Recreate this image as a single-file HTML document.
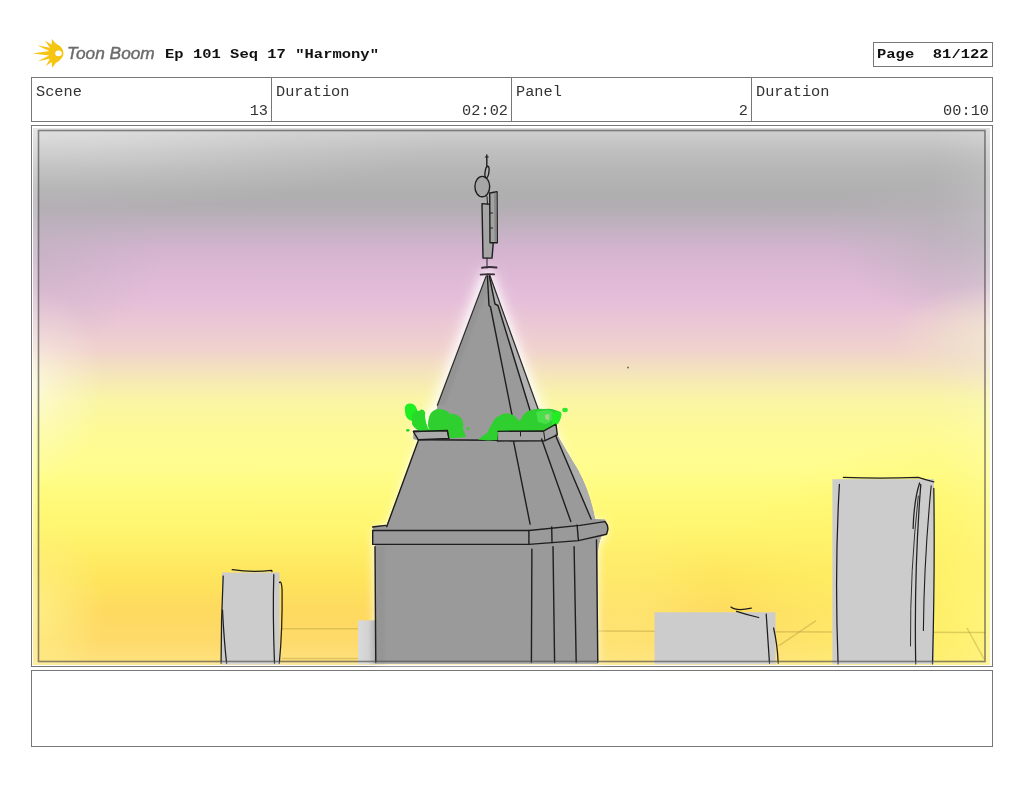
<!DOCTYPE html>
<html><head><meta charset="utf-8">
<style>
html,body{margin:0;padding:0;background:#fff;}
body{width:1024px;height:793px;position:relative;overflow:hidden;font-family:"Liberation Mono",monospace;color:#111;}
.abs{position:absolute;}
.logo{left:67px;top:45px;font-family:"Liberation Sans",sans-serif;font-style:italic;font-size:16px;line-height:18px;color:#6b6b6b;-webkit-text-stroke:0.4px #6b6b6b;white-space:pre;transform-origin:0 0;transform:scaleX(1.08);}
.title{left:165px;top:47px;font-weight:bold;font-size:15.5px;line-height:18px;white-space:pre;transform-origin:0 0;transform:scaleY(0.88);}
.page{left:873px;top:42px;width:120px;height:25px;border:1px solid #777;box-sizing:border-box;}
.ptxt{position:absolute;left:3px;top:4px;font-weight:bold;font-size:15.5px;line-height:18px;white-space:pre;transform-origin:0 0;transform:scaleY(0.88);}
.hdr{left:31px;top:77px;width:962px;height:45px;border:1px solid #777;box-sizing:border-box;}
.cell{position:absolute;top:0;height:43px;border-right:1px solid #777;box-sizing:border-box;}
.lbl{position:absolute;color:#333;left:4px;top:6px;font-size:15.3px;line-height:18px;white-space:pre;transform-origin:0 0;transform:scaleY(0.9);}
.val{position:absolute;color:#333;right:3px;top:25px;font-size:15.3px;line-height:18px;white-space:pre;transform-origin:100% 0;transform:scaleY(0.9);}
.panel{left:31px;top:125px;width:962px;height:542px;border:1px solid #777;box-sizing:border-box;}
.cap{left:31px;top:670px;width:962px;height:77px;border:1px solid #777;box-sizing:border-box;}
</style></head>
<body>
<svg class="abs" style="left:0;top:0" width="170" height="75" viewBox="0 0 170 75">
<path fill="#f6c512" d="M51.9 39 L55.8 43.6 Q63.6 47.6 63.5 53.2 Q63.5 58.8 55.8 63 L52.3 67.7 L51.6 62 L45.9 66 L49.8 58.8 L37.7 61.3 L49.2 55.6 L32.6 53.4 L49.2 51 L37.1 45.2 L49.8 47.8 L45 40.5 L51.6 44.8 Z"/>
<ellipse cx="58.5" cy="53.3" rx="3.3" ry="2.9" fill="#fff"/>
</svg>
<div class="abs logo">Toon Boom</div>
<div class="abs title">Ep 101 Seq 17 "Harmony"</div>
<div class="abs page"><span class="ptxt">Page  81/122</span></div>
<div class="abs hdr">
 <div class="cell" style="left:0;width:240px;"><span class="lbl">Scene</span><span class="val">13</span></div>
 <div class="cell" style="left:240px;width:240px;"><span class="lbl">Duration</span><span class="val">02:02</span></div>
 <div class="cell" style="left:480px;width:240px;"><span class="lbl">Panel</span><span class="val">2</span></div>
 <div class="cell" style="left:720px;width:240px;border-right:none;"><span class="lbl">Duration</span><span class="val">00:10</span></div>
</div>
<div class="abs panel"></div>
<svg class="abs" style="left:0;top:0" width="1024" height="793" viewBox="0 0 1024 793">
<defs>
 <linearGradient id="sky" x1="0" y1="128" x2="0" y2="665" gradientUnits="userSpaceOnUse">
  <stop offset="0.0000" stop-color="#d0d0d0"/>
  <stop offset="0.0410" stop-color="#c0c0c0"/>
  <stop offset="0.0782" stop-color="#b6b6b6"/>
  <stop offset="0.1155" stop-color="#b0b0b0"/>
  <stop offset="0.1434" stop-color="#b1aeb1"/>
  <stop offset="0.1713" stop-color="#bcb0bc"/>
  <stop offset="0.2272" stop-color="#d4b4d0"/>
  <stop offset="0.2737" stop-color="#deb9d6"/>
  <stop offset="0.3203" stop-color="#e5bed9"/>
  <stop offset="0.3669" stop-color="#ebc8d4"/>
  <stop offset="0.4134" stop-color="#f0d2cd"/>
  <stop offset="0.4600" stop-color="#f5e6b9"/>
  <stop offset="0.5065" stop-color="#faf5a5"/>
  <stop offset="0.5624" stop-color="#fdfa96"/>
  <stop offset="0.6369" stop-color="#fffd8c"/>
  <stop offset="0.6927" stop-color="#fffa7a"/>
  <stop offset="0.7486" stop-color="#fff56e"/>
  <stop offset="0.8417" stop-color="#fee45c"/>
  <stop offset="0.8976" stop-color="#feda5f"/>
  <stop offset="0.9534" stop-color="#feda6a"/>
  <stop offset="1.0000" stop-color="#fee280"/>
 </linearGradient>
 <linearGradient id="vig" x1="33" y1="0" x2="990" y2="0" gradientUnits="userSpaceOnUse">
  <stop offset="0" stop-color="#fff" stop-opacity="0"/>
  <stop offset="0.94" stop-color="#fff" stop-opacity="0"/>
  <stop offset="0.97" stop-color="#fff" stop-opacity="0.05"/>
  <stop offset="1" stop-color="#fff" stop-opacity="0.12"/>
 </linearGradient>
 <linearGradient id="lightrect" x1="358" y1="0" x2="375" y2="0" gradientUnits="userSpaceOnUse">
  <stop offset="0" stop-color="#dadada"/><stop offset="0.6" stop-color="#d2d2d2"/><stop offset="1" stop-color="#b4b4b4"/>
 </linearGradient>
 <radialGradient id="lemonR" cx="1000" cy="610" r="300" gradientUnits="userSpaceOnUse" gradientTransform="translate(1000 610) scale(1 0.6) translate(-1000 -610)">
  <stop offset="0" stop-color="#fff66a" stop-opacity="0.95"/>
  <stop offset="0.45" stop-color="#fff56a" stop-opacity="0.6"/>
  <stop offset="1" stop-color="#fff56a" stop-opacity="0"/>
 </radialGradient>
 <radialGradient id="grayR" cx="1000" cy="235" r="170" gradientUnits="userSpaceOnUse" gradientTransform="translate(1000 235) scale(1 0.55) translate(-1000 -235)">
  <stop offset="0" stop-color="#b4b0b6" stop-opacity="0.85"/>
  <stop offset="0.55" stop-color="#b8b4b8" stop-opacity="0.4"/>
  <stop offset="1" stop-color="#b8b4b8" stop-opacity="0"/>
 </radialGradient>
 <radialGradient id="peachR" cx="1000" cy="338" r="110" gradientUnits="userSpaceOnUse" gradientTransform="translate(1000 338) scale(1 0.5) translate(-1000 -338)">
  <stop offset="0" stop-color="#f0e6c8" stop-opacity="0.8"/>
  <stop offset="0.5" stop-color="#f0e6c8" stop-opacity="0.45"/>
  <stop offset="1" stop-color="#f0e6c8" stop-opacity="0"/>
 </radialGradient>
 <radialGradient id="paleL" cx="33" cy="385" r="100" gradientUnits="userSpaceOnUse" gradientTransform="translate(33 385) scale(0.7 1) translate(-33 -385)">
  <stop offset="0" stop-color="#fffff0" stop-opacity="0.6"/>
  <stop offset="0.5" stop-color="#fffff0" stop-opacity="0.25"/>
  <stop offset="1" stop-color="#fffff0" stop-opacity="0"/>
 </radialGradient>
 <radialGradient id="lemonL" cx="33" cy="610" r="90" gradientUnits="userSpaceOnUse" gradientTransform="translate(33 610) scale(0.8 1) translate(-33 -610)">
  <stop offset="0" stop-color="#fff490" stop-opacity="0.75"/>
  <stop offset="1" stop-color="#fff490" stop-opacity="0"/>
 </radialGradient>
 <radialGradient id="lightTL" cx="33" cy="128" r="420" gradientUnits="userSpaceOnUse" gradientTransform="translate(33 128) scale(1 0.2) translate(-33 -128)">
  <stop offset="0" stop-color="#fff" stop-opacity="0.35"/>
  <stop offset="0.3" stop-color="#fff" stop-opacity="0.25"/>
  <stop offset="0.65" stop-color="#fff" stop-opacity="0.1"/>
  <stop offset="1" stop-color="#fff" stop-opacity="0"/>
 </radialGradient>
 <radialGradient id="grayL" cx="33" cy="255" r="130" gradientUnits="userSpaceOnUse" gradientTransform="translate(33 255) scale(1 0.75) translate(-33 -255)">
  <stop offset="0" stop-color="#b8b0b8" stop-opacity="0.45"/>
  <stop offset="1" stop-color="#b8b0b8" stop-opacity="0"/>
 </radialGradient>
 <radialGradient id="lemonM" cx="625" cy="610" r="100" gradientUnits="userSpaceOnUse">
  <stop offset="0" stop-color="#fff284" stop-opacity="0.45"/>
  <stop offset="0.6" stop-color="#fff284" stop-opacity="0.2"/>
  <stop offset="1" stop-color="#fff284" stop-opacity="0"/>
 </radialGradient>
 <filter id="glow" x="-30%" y="-30%" width="160%" height="160%"><feGaussianBlur stdDeviation="5"/></filter>
 <filter id="glow2" x="-50%" y="-50%" width="200%" height="200%"><feMorphology operator="dilate" radius="4"/><feGaussianBlur stdDeviation="7"/></filter>
 <filter id="blur1" x="-20%" y="-20%" width="140%" height="140%"><feGaussianBlur stdDeviation="0.8"/></filter>
</defs>
<rect x="33" y="128" width="957" height="537" fill="url(#sky)"/>
<rect x="33" y="128" width="957" height="537" fill="url(#lemonR)"/>
<rect x="33" y="128" width="957" height="537" fill="url(#grayR)"/>
<rect x="33" y="128" width="957" height="537" fill="url(#peachR)"/>
<rect x="33" y="128" width="957" height="537" fill="url(#vig)"/>
<rect x="33" y="128" width="957" height="537" fill="url(#grayL)"/>
<rect x="33" y="128" width="957" height="537" fill="url(#paleL)"/>
<rect x="33" y="128" width="957" height="537" fill="url(#lightTL)"/>
<rect x="33" y="128" width="957" height="537" fill="url(#lemonL)"/>
<rect x="33" y="128" width="957" height="537" fill="url(#lemonM)"/>
<!-- perspective lines -->
<g stroke="#b8a040" stroke-opacity="0.45" stroke-width="1.5" fill="none">
 <path d="M282 628.7 L358 628.7"/>
 <path d="M598 631 L985 632.6"/>
 <path d="M779 645.7 L816 620.6"/>
 <path d="M967 628 L984 659"/>
 <path d="M282 658.5 L358 658.5"/>
</g>
<!-- glow around tower -->
<g filter="url(#glow)" fill="#fff" opacity="0.85">
 <path d="M487 268 L540 410 L556 430 L592 519 L606 522 L606 536 L598 545 L598 664 L375 664 L373 528 L387 526 L418 440 L412 430 L437 405 Z"/>
</g>
<g filter="url(#glow2)" fill="#fff" opacity="0.65">
 <path d="M487 272 L538 409 L548 425 L428 425 L437 405 Z"/>
</g>
<circle cx="628" cy="367.5" r="1" fill="#555" opacity="0.8"/>
<!-- small buildings -->
<rect x="222" y="572.5" width="57.5" height="92" fill="#cccccc"/>
<rect x="358" y="620.4" width="17" height="44" fill="url(#lightrect)"/>
<rect x="654.5" y="612.3" width="121" height="52" fill="#cccccc"/>
<rect x="832.4" y="479.2" width="101.5" height="185" fill="#cccccc"/>
<g stroke="#1e1e1e" stroke-width="1.25" fill="none" stroke-linecap="round" stroke-linejoin="round">
 <path d="M232.2 569.7 Q251.6 572.5 271.7 570.4 L272 571.5"/>
 <path d="M223.2 576 Q221 620 221.1 663.3"/>
 <path d="M222.5 610 Q224 640 226.6 663.3"/>
 <path d="M273.8 574.6 Q272.6 612.7 274.5 663.3"/>
 <path d="M279.5 582.5 Q281.5 580 282.1 590 Q282.5 630 279.3 663.3"/>
 <path d="M730.9 607.1 Q736.5 611.5 751.3 608.2"/>
 <path d="M736.5 611.3 Q748 615 758.7 617.5"/>
 <path d="M766.2 614.1 Q768 640 769.5 663.3"/>
 <path d="M773.6 628 Q777.5 645 778.2 663.3"/>
 <path d="M843.3 477.4 Q880 479 918.3 477.4 Q926 480 933.8 481.8"/>
 <path d="M839.4 484.4 Q834.5 568.4 838.1 664"/>
 <path d="M919.6 483 Q914 500 913.1 528.4"/>
 <path d="M920.8 484.4 Q914 570 915.7 664"/>
 <path d="M918.3 496 Q910 570 910.5 646" stroke-width="0.9"/>
 <path d="M931.2 485.7 Q924 560 923.4 630.5" stroke-width="1.1"/>
 <path d="M933.8 488.3 Q935 570 932.5 664"/>
</g>
<!-- tower body -->
<path fill="#9a9a9a" d="M487.4 273 L490 275 L538.4 409.8 L556 424 L557.3 435 Q567 452 578 470 Q590 492 595 519 L605 519.6 L608 525 L608 531 L606.5 534 L601 537 Q597 548 597.5 562 L598 664 L375 664 L375 545 L372.7 544.4 L372.7 526 L386.7 525 L418.4 440.5 L413.3 439 L413.3 430.2 L433 430 L437.4 405.3 L486.2 275.9 Z"/>
<!-- right slivers lighter -->
<path fill="#b8b8b8" opacity="0.8" d="M490 277 L538 409.8 L531 412 L498 305.5 L495 304 Z"/>
<path fill="#8a8a8a" opacity="0.35" d="M486.2 275.9 L437.4 405.3 L445 405 L487 290 Z" filter="url(#blur1)"/>
<path fill="#acacac" d="M557.3 435 Q567 452 578 470 Q590 492 595 519 L591.1 519 L555.5 435.2 Z"/>
<path fill="#a8a8a8" d="M597 540 L601 537 Q597 548 597.5 562 L598 664 L597.5 664 Z"/>
<!-- shading -->
<path fill="#8e8e8e" opacity="0.35" d="M375 546 L385 546 L385 664 L375 664 Z" filter="url(#blur1)"/>
<!-- antenna fills -->
<g fill="#a6a6a6">
 <path d="M482 203.6 L492.5 204.5 L493.1 245 L492 258.1 L483 258.1 Z"/>
 <ellipse cx="482.3" cy="186.6" rx="7" ry="9.6"/>
</g>
<g stroke="#1e1e1e" stroke-width="1.4" fill="none" stroke-linecap="round" stroke-linejoin="round">
 <!-- antenna -->
 <path d="M486.8 155 L486.8 167"/>
 <path d="M485.3 157 L488.3 157" stroke-width="1"/>
 <ellipse cx="487" cy="172" rx="1.9" ry="5.8" transform="rotate(8 487 172)"/>
 <path d="M487 196.5 L487.5 204" stroke-width="1"/>
 <ellipse cx="482.3" cy="186.6" rx="7.4" ry="10.2"/>
 <path d="M482 203.6 L492.5 204.5 L493.1 245 L492 258.1 L483 258.1 Z"/>
 <path d="M489.7 193 L497 191.7 L497.3 242.8 L490 242.8 Z" fill="#a2a2a2"/>
 <path d="M494 193 L496.5 192.5 L496.7 242 L494.5 242 Z" fill="#8a8a8a" stroke="none"/>
 <path d="M490.5 213 L492.5 213 M490.5 228 L492.5 228" stroke-width="1"/>
 <path d="M487 258 L487 268" stroke-width="1"/>
 <path d="M482 267.8 Q489 266.5 496.5 267.5" stroke-width="2" stroke="#3a2e3a"/>
 <path d="M480.6 274.6 Q487 273.8 494.2 274.4" stroke-width="1.8" stroke="#3a2e3a"/>
 <!-- spire -->
 <path d="M486.2 275.9 L437.4 405.3" stroke="#2e2e2e" stroke-width="1.25"/>
 <path d="M489.6 274.8 L538.4 409.8" stroke="#2e2e2e" stroke-width="1.25"/>
 <path d="M487.4 276 L489 305.5 L490.5 307 L512.3 416.6"/>
 <path d="M489.3 276 L495 304 L498 305.5 L530.5 412"/>
 <!-- ledge -->
 <path d="M413.3 431.5 L447.5 430.5 L448.9 438.5 L418.4 439.8 L413.3 431.5 Z" fill="#ababab"/>
 <path d="M418.4 439.8 L497.1 440.3"/>
 <path d="M497.4 431.3 L543.6 431 L556 424 L557.3 434.8 L545 440.7 L497.4 441 Z" fill="#a4a4a4"/>
 <path d="M520.5 431.5 L520.5 436" stroke-width="1"/>
 <path d="M543.6 431 L545 440.7" stroke-width="1"/>
 <!-- lower roof -->
 <path d="M418.4 440.3 L386.7 526.7"/>
 <path d="M513.6 441.6 L530.1 524.1"/>
 <path d="M541.6 439 L570.8 521.6"/>
 <path d="M555.5 435.2 L591.1 519"/>
 <!-- cornice -->
 <path d="M372.7 527 L386 525.4"/>
 <path d="M372.7 530.5 L528.9 530.5 L580 525.4 L605 521.6 Q609 526 607.5 531 L606.5 534.3 L578.4 540.6 L528.9 544.4 L372.7 544.4 Z"/>
 <path d="M528.9 530.5 L528.9 544.4"/>
 <path d="M551.7 527 L552 542.5"/>
 <path d="M577.1 525 L578.4 540.6"/>
 <!-- walls -->
 <path d="M375 546.6 L375.8 662.6"/>
 <path d="M531.9 549.2 L531.4 662.6"/>
 <path d="M553 546.6 L554.6 662.6"/>
 <path d="M574.1 546.6 L576.2 662.6"/>
 <path d="M596.5 540 L597.8 662.6"/>
</g>
<!-- foliage -->
<g fill="#2fcf2f">
 <path fill="#20ee20" d="M405 411 Q404 404 409 403.5 Q414 403 416 407 Q418 410 417 413 L419 416 Q421 419 419 421 L412 421 Q405 419 405 411 Z"/>
 <path fill="#2ad82a" d="M412 414 Q415 410 419 411 L421 409.5 Q424 409 425 412 L425 417 Q426 424 428 428 L431 431 L422 431.5 Q415 430 412 424 Z"/>
 <path d="M428 426 Q428 414 433 411 Q437 408 442 409.5 Q447 410 450 414 Q455 413 458 416 Q462 418 462.5 421 Q464 425 463 429 L466 437 L455 438 L449 438 L448 431 L430 431.5 Z"/>
 <ellipse cx="407.8" cy="430.3" rx="1.8" ry="1.4"/>
 <ellipse cx="468" cy="428.5" rx="1.6" ry="1.3"/>
 <path d="M478 439.5 Q482 436 487 433 Q489 428 492 424 Q494 418 499 416 Q504 412 510 414 Q515 415 517 419 L520 421 Q523 414 528 411 Q536 408 544 409 Q551 408 555 410 Q560 411 561.5 414 Q561 420 556 424 Q552 428 548 429 L544 431 L520 431.5 L498 432 L497.5 440 L488 440.5 Z"/>
 <path fill="#48e048" d="M536 412 Q546 409 552 411 L555 416 Q552 422 546 424 L538 422 Z"/>
 <path fill="#24ec24" d="M552 414 Q556 410 561 412 Q562 418 558 424 L552 426 Z"/>
 <ellipse cx="565" cy="410" rx="2.8" ry="2.2" fill="#30e830"/>
 <path fill="#c8c8a0" d="M545 415 L549.5 414 L549 420.5 L545.5 419 Z" opacity="0.8"/>
</g>
<g stroke="#1e1e1e" stroke-width="1.3" fill="none" stroke-linejoin="round">
 <path d="M413.3 431.5 L447.5 430.5 L448.9 438.5"/>
 <path d="M497.4 431.3 L543.6 431 L556 424"/>
</g>
<!-- frame -->
<path fill-rule="evenodd" fill="#fff" fill-opacity="0.22" d="M33 128 H990 V665 H33 Z M39 131 V661 H985 V131 Z"/>
<rect x="38.5" y="130.5" width="946.5" height="531" fill="none" stroke="#3a3a3a" stroke-opacity="0.6" stroke-width="1.6"/>
</svg>

<div class="abs cap"></div>
</body></html>
